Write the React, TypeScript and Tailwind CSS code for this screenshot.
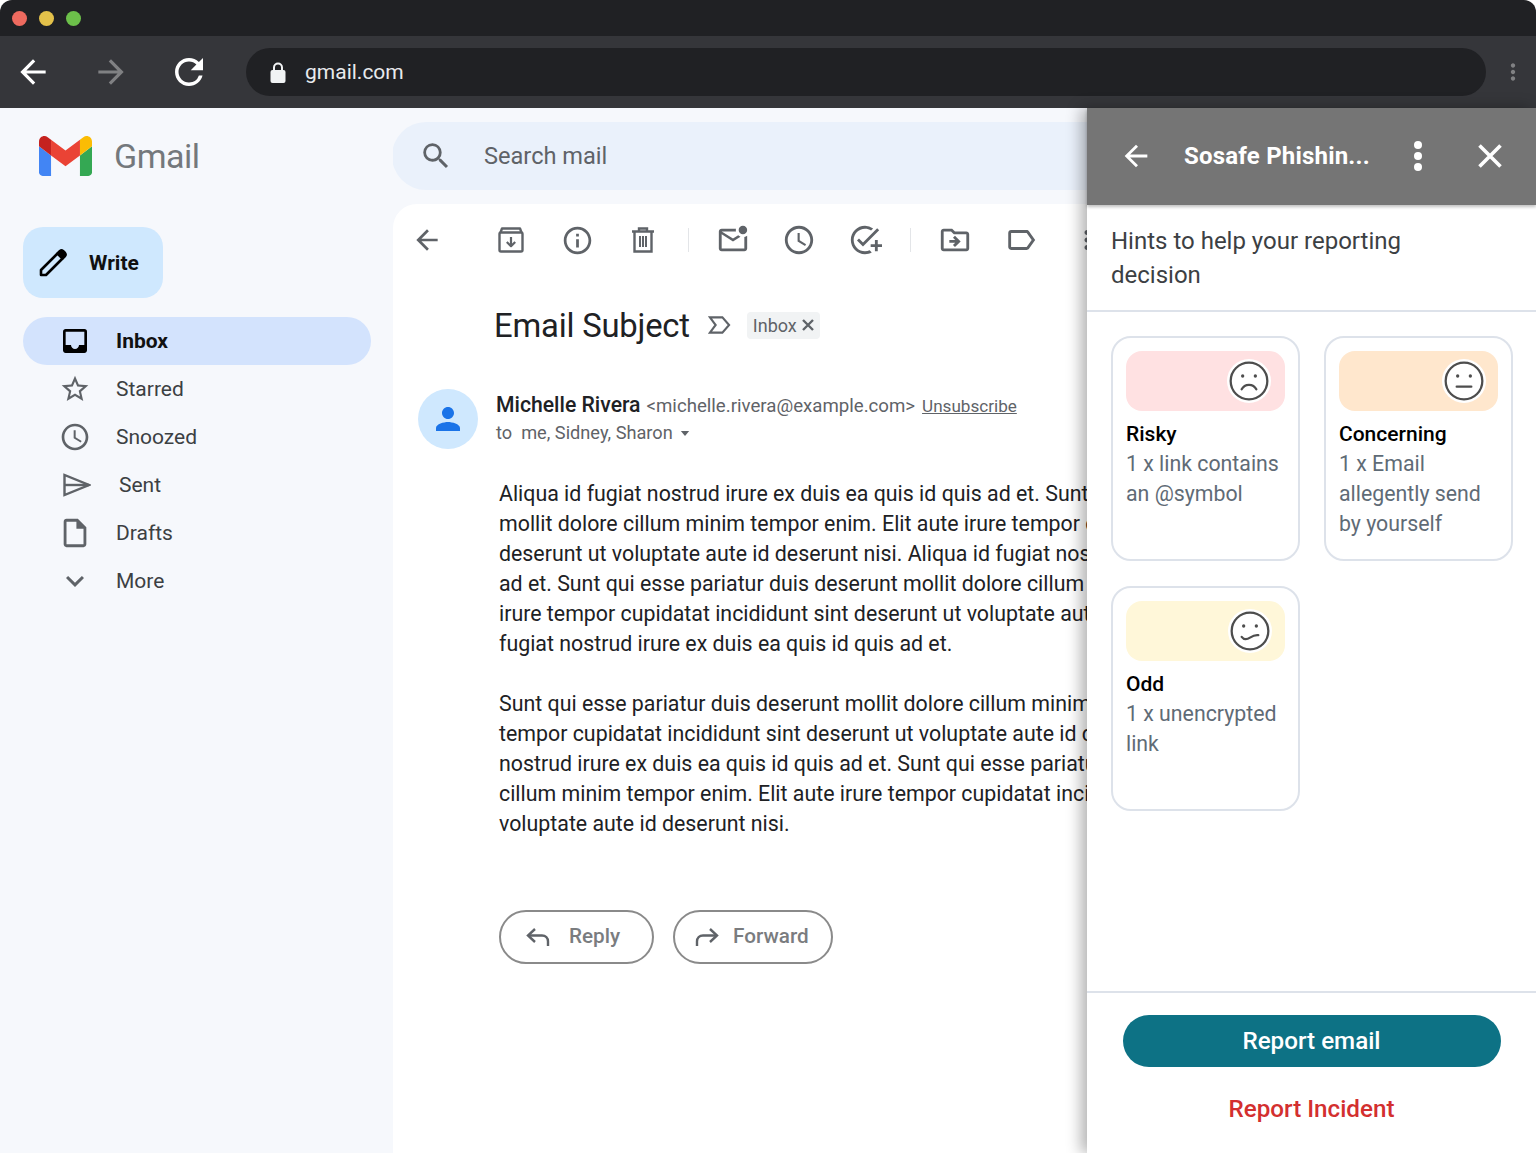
import {
  MdAccessTime,
  MdArrowBack,
  MdExpandMore,
  MdInbox,
  MdInfoOutline,
  MdMoreVert,
  MdOutlineAddTask,
  MdOutlineDriveFileMove,
  MdOutlineInsertDriveFile,
  MdOutlineLabel,
  MdOutlineMarkEmailUnread,
  MdPerson,
  MdRefresh,
  MdSearch,
  MdStarBorder,
} from "react-icons/md";

const navItems = [
  { label: "Starred", icon: <MdStarBorder className="h-8 w-8" /> },
  { label: "Snoozed", icon: <MdAccessTime className="h-8 w-8" /> },
  { label: "Sent", icon: <SentIcon />, shift: true },
  { label: "Drafts", icon: <MdOutlineInsertDriveFile className="h-[34px] w-[34px] shrink-0" /> },
  { label: "More", icon: <MdExpandMore className="h-[36px] w-[36px] shrink-0" /> },
];

const hints = [
  { title: "Risky", lines: ["1 x link contains", "an @symbol"], color: "bg-[#ffe1e2]", pad: "pr-[14px]", mouth: "M7.600 17c1.800-3.600 7-3.600 8.800 0" },
  { title: "Concerning", lines: ["1 x Email", "allegently send", "by yourself"], color: "bg-[#ffe7cd]", pad: "pr-[12px]", mouth: "M7.600 15.400h8.800" },
  { title: "Odd", lines: ["1 x unencrypted", "link"], color: "bg-[#fff7d9]", pad: "pr-[13px]", mouth: "M7 15.500c1.500 2 3.500 1.500 5 .5s3-1.800 5-1.500" },
];

function SentIcon() {
  return (
    <svg viewBox="0 0 28 24" className="ml-[4px] h-[24px] w-[28px] shrink-0" fill="none" stroke="currentColor" strokeWidth="2.400">
      <path d="M1.500 2v20L26 12 1.500 2Z" />
      <path d="M1.500 12H26" />
    </svg>
  );
}

function ArchiveIcon() {
  return (
    <svg viewBox="0 0 28 28" className="h-7 w-7" fill="none" stroke="#5f6368" strokeWidth="2.400" strokeLinejoin="round">
      <rect x="2.500" y="6.500" width="23" height="19" rx="1.500" />
      <path d="M3.500 6.500 5 2.500h18l1.500 4" />
      <path d="M14 11v9M9.800 16l4.200 4.200 4.200-4.200" strokeWidth="2.200" />
    </svg>
  );
}

function TrashIcon() {
  return (
    <svg viewBox="0 0 28 28" className="h-7 w-7" fill="none" stroke="#5f6368" strokeWidth="2.400">
      <path d="M3 5.500h22M10 5.500V2.500h8v3M5.500 5.500v20h17v-20" />
      <path d="M11 10v11M14 10v11M17 10v11" strokeWidth="2" />
    </svg>
  );
}

function Pencil() {
  return (
    <svg viewBox="0 0 28 28" className="h-[28px] w-[28px]" fill="none" stroke="#000" strokeWidth="2.600" strokeLinejoin="round">
      <path d="M2 26v-5L18.500 4.500l5 5L7 26H2Z" />
      <path d="M19 4l2-2c1-.8 2-.8 3 0l2 2c.8 1 .8 2 0 3l-2 2-5-5Z" fill="#000" />
    </svg>
  );
}

function LockIcon() {
  return (
    <svg viewBox="0 0 16 21" className="h-[21px] w-[16px]">
      <path d="M4 9V5.500a4 4 0 0 1 8 0V9" fill="none" stroke="#f1f3f4" strokeWidth="2" />
      <rect x="0.500" y="8" width="15" height="13" rx="2" fill="#f1f3f4" />
    </svg>
  );
}

function ImportantIcon() {
  return (
    <svg viewBox="0 0 24 20" className="h-[20px] w-[23px]" fill="none" stroke="#5f6368" strokeWidth="2.200">
      <path d="M2 2h13l7 8-7 8H2l6-8-6-8Z" />
    </svg>
  );
}

function ReplyIcon({ flip }: { flip?: boolean }) {
  return (
    <svg viewBox="0 0 24 20" className={flip ? "h-[20px] w-[24px] -scale-x-100" : "h-[20px] w-[24px]"} fill="none" stroke="#5f6368" strokeWidth="2.400">
      <path d="M9 2 2 8.500 9 15" />
      <path d="M2 8.500h14c3.500 0 6 2.500 6 6V19" />
    </svg>
  );
}

function Face({ mouth }: { mouth: string }) {
  return (
    <div className="flex h-[44px] w-[44px] items-center justify-center rounded-full bg-white">
      <svg viewBox="0 0 24 24" className="h-[40px] w-[40px]" fill="none" stroke="#4d4d4d" strokeWidth="1.350" strokeLinecap="round">
        <circle cx="12" cy="12" r="11" />
        <circle cx="8.200" cy="9" r="1" fill="#4d4d4d" stroke="none" />
        <circle cx="15.800" cy="9" r="1" fill="#4d4d4d" stroke="none" />
        <path d={mouth} />
      </svg>
    </div>
  );
}

function ToolButton({ children }: { children: React.ReactNode }) {
  return <div className="flex w-[66px] shrink-0 items-center justify-center text-[#5f6368]">{children}</div>;
}

function Divider() {
  return (
    <div className="flex w-[24px] shrink-0 justify-center">
      <div className="h-[24px] w-px bg-[#e3e5e8]" />
    </div>
  );
}

function Sidebar() {
  return (
    <aside className="flex w-[393px] shrink-0 flex-col pt-[28px]">
      <div className="flex h-[40px] items-center pl-[39px]">
        <svg viewBox="52 42 88 66" className="h-[40px] w-[53px]">
          <path fill="#4285f4" d="M58 108h14V74L52 59v43c0 3.320 2.690 6 6 6" />
          <path fill="#34a853" d="M120 108h14c3.320 0 6-2.690 6-6V59l-20 15" />
          <path fill="#fbbc04" d="M120 48v26l20-15v-8c0-7.420-8.470-11.650-14.400-7.200" />
          <path fill="#ea4335" d="M72 74V48l24 18 24-18v26L96 92" />
          <path fill="#c5221f" d="M52 51v8l20 15V48l-5.600-4.200c-5.940-4.450-14.400-.22-14.400 7.200" />
        </svg>
        <span className="ml-[22px] text-[34px] leading-none tracking-[-0.5px] text-[#74787c]">Gmail</span>
      </div>

      <button className="ml-[23px] mt-[51px] flex h-[71px] w-[140px] items-center rounded-[20px] bg-[#cfe8fe] pl-[16px]">
        <Pencil />
        <span className="ml-[22px] pt-[2px] text-[21px] font-bold text-[#111]">Write</span>
      </button>

      <div className="ml-[23px] mr-[22px] mt-[19px] flex h-[48px] items-center rounded-full bg-[#d3e3fd] pl-[36px]">
        <MdInbox className="h-[32px] w-[32px] text-black" />
        <span className="ml-[25px] pt-[2px] text-[21px] font-bold text-[#111]">Inbox</span>
      </div>
      {navItems.map((item) => (
        <div key={item.label} className="flex h-[48px] items-center pl-[59px] text-[#5f6368]">
          <div className="flex w-[32px] justify-center">{item.icon}</div>
          <span className={`pt-[2px] text-[21px] text-[#3c4043] ${item.shift ? "ml-[28px]" : "ml-[25px]"}`}>{item.label}</span>
        </div>
      ))}
    </aside>
  );
}

function MailView() {
  return (
    <main className="flex min-w-0 flex-1 flex-col overflow-hidden pt-[14px]">
      <div className="-ml-px flex h-[68px] shrink-0 items-center rounded-l-[34px] bg-[#eaf1fb] pl-[27px]">
        <MdSearch className="h-[34px] w-[34px] text-[#5f6368]" />
        <span className="ml-[31px] pt-[2px] text-[23.600px] text-[#5f6368]">Search mail</span>
      </div>

      <div className="mt-[14px] flex min-h-0 flex-1 flex-col rounded-tl-[24px] bg-white pl-px">
        {/* toolbar */}
        <div className="flex h-[72px] shrink-0 items-center">
          <ToolButton><MdArrowBack className="h-[32px] w-[32px]" /></ToolButton>
          <div className="w-[18px] shrink-0" />
          <ToolButton><ArchiveIcon /></ToolButton>
          <ToolButton><MdInfoOutline className="h-[33px] w-[33px]" /></ToolButton>
          <ToolButton><TrashIcon /></ToolButton>
          <Divider />
          <ToolButton><MdOutlineMarkEmailUnread className="h-[34px] w-[34px]" /></ToolButton>
          <ToolButton><MdAccessTime className="h-[34px] w-[34px]" /></ToolButton>
          <ToolButton><MdOutlineAddTask className="h-[34px] w-[34px]" /></ToolButton>
          <Divider />
          <ToolButton><MdOutlineDriveFileMove className="h-[34px] w-[34px]" /></ToolButton>
          <ToolButton><MdOutlineLabel className="h-[34px] w-[34px]" /></ToolButton>
          <ToolButton><MdMoreVert className="h-[30px] w-[30px]" /></ToolButton>
        </div>

        {/* subject */}
        <div className="mt-[28px] flex h-[44px] shrink-0 items-center pl-[100px]">
          <h1 className="text-[32.800px] font-normal leading-none tracking-[-0.2px] text-[#202124]">Email Subject</h1>
          <div className="ml-[18px] mt-[-2px]"><ImportantIcon /></div>
          <div className="ml-[16px] mt-[-2px] flex h-[27px] items-center rounded-[4px] bg-[#f1f3f4] pl-[6px] pr-[6px] text-[18px] text-[#5f6368]">
            Inbox
            <svg viewBox="0 0 12 12" className="ml-[5px] h-[12px] w-[12px]" stroke="#5f6368" strokeWidth="2.400">
              <path d="M1 1l10 10M11 1 1 11" />
            </svg>
          </div>
        </div>

        {/* sender */}
        <div className="mt-[41px] flex shrink-0 pl-[24px]">
          <div className="flex h-[60px] w-[60px] items-center justify-center rounded-full bg-[#cfe8fe]">
            <MdPerson className="h-[36px] w-[36px] text-[#1a73e8]" />
          </div>
          <div className="ml-[18px] whitespace-nowrap">
            <div className="flex h-[30px] items-baseline">
              <span className="text-[21.200px] font-medium text-[#202124]">Michelle Rivera</span>
              <span className="ml-[6px] text-[18.650px] text-[#5f6368]">&lt;michelle.rivera@example.com&gt;</span>
              <span className="ml-[7px] text-[17.100px] text-[#5f6368] underline">Unsubscribe</span>
            </div>
            <div className="mt-[1px] flex h-[26px] items-center text-[18.200px] text-[#5f6368]">
              <span>to&nbsp; me, Sidney, Sharon</span>
              <svg viewBox="0 0 10 6" className="ml-[7px] h-[5px] w-[10px]"><path d="M0 0h10L5 6z" fill="#5f6368" /></svg>
            </div>
          </div>
        </div>

        {/* body, runs on under the side panel */}
        <div className="ml-[105px] mt-[30px] w-[900px] shrink-0 whitespace-nowrap text-[21.350px] leading-[30px] text-[#202124]">
          <p>Aliqua id fugiat nostrud irure ex duis ea quis id quis ad et. Sunt qui esse<br />
            mollit dolore cillum minim tempor enim. Elit aute irure tempor cupidatat<br />
            deserunt ut voluptate aute id deserunt nisi. Aliqua id fugiat nostrud irure<br />
            ad et. Sunt qui esse pariatur duis deserunt mollit dolore cillum minim tempor<br />
            irure tempor cupidatat incididunt sint deserunt ut voluptate aute id deserunt<br />
            fugiat nostrud irure ex duis ea quis id quis ad et.</p>
          <p className="mt-[30px]">Sunt qui esse pariatur duis deserunt mollit dolore cillum minim tempor enim<br />
            tempor cupidatat incididunt sint deserunt ut voluptate aute id deserunt nisi<br />
            nostrud irure ex duis ea quis id quis ad et. Sunt qui esse pariatur duis<br />
            cillum minim tempor enim. Elit aute irure tempor cupidatat incididunt sint<br />
            voluptate aute id deserunt nisi.</p>
        </div>

        {/* actions */}
        <div className="ml-[105px] mt-[71px] flex shrink-0 gap-[19px] text-[20.700px] font-medium text-[#7a7c7f]">
          <button className="flex h-[54px] w-[155px] items-center rounded-full border-2 border-[#8a8a8a] pl-[25px]">
            <ReplyIcon />
            <span className="ml-[19px]">Reply</span>
          </button>
          <button className="flex h-[54px] w-[160px] items-center rounded-full border-2 border-[#8a8a8a] pl-[20px]">
            <ReplyIcon flip />
            <span className="ml-[14px]">Forward</span>
          </button>
        </div>
      </div>
    </main>
  );
}

function SidePanel() {
  return (
    <section className="relative z-10 flex w-[449px] shrink-0 flex-col bg-white shadow-[-6px_0_14px_rgba(0,0,0,0.3)]">
      <header className="flex h-[97px] shrink-0 items-center bg-[#757575] pb-[2px] pl-[32px] text-white shadow-[0_2px_3px_rgba(0,0,0,0.25)]">
        <MdArrowBack className="h-[34px] w-[34px]" />
        <span className="ml-[31px] text-[24px] font-bold tracking-[0.2px]">Sosafe Phishin...</span>
        <svg viewBox="0 0 8 30" className="ml-[44px] h-[30px] w-[8px]" fill="#fff">
          <circle cx="4" cy="4" r="4" />
          <circle cx="4" cy="15" r="4" />
          <circle cx="4" cy="26" r="4" />
        </svg>
        <svg viewBox="0 0 24 24" className="ml-[56px] h-[24px] w-[24px]" stroke="#fff" strokeWidth="3.600">
          <path d="M1.500 1.500l21 21M22.500 1.500l-21 21" />
        </svg>
      </header>

      <div className="border-b-2 border-[#dde2ea] px-[24px] pb-[18px] pt-[19px] text-[24px] leading-[34px] text-[#3c4043]">
        Hints to help your reporting<br />decision
      </div>

      <div className="grid flex-1 grid-cols-[189px_189px] content-start gap-x-[24px] gap-y-[25px] p-[24px]">
        {hints.map((hint) => (
          <div key={hint.title} className="h-[225px] rounded-[20px] border-2 border-[#dde2ea] p-[13px]">
            <div className={`flex h-[60px] items-center justify-end rounded-[16px] ${hint.pad} ${hint.color}`}>
              <Face mouth={hint.mouth} />
            </div>
            <div className="mt-[8px] text-[21px] font-medium leading-[30px] text-black">{hint.title}</div>
            <div className="text-[21.300px] leading-[30px] text-[#5f6b76]">
              {hint.lines.map((line) => (
                <div key={line}>{line}</div>
              ))}
            </div>
          </div>
        ))}
      </div>

      <footer className="flex h-[162px] shrink-0 flex-col items-center border-t-2 border-[#dde2ea] pt-[22px]">
        <button className="h-[52px] w-[378px] rounded-full bg-[#0d7285] text-[24.200px] font-medium text-white">Report email</button>
        <button className="mt-[24px] text-[24.200px] font-medium text-[#d32f2f]">Report Incident</button>
      </footer>
    </section>
  );
}

export default function App() {
  return (
    <div className="h-[1153px] w-[1536px] overflow-hidden bg-white font-['Roboto',sans-serif]">
      <div className="flex h-[36px] items-center gap-[12px] rounded-t-[12px] bg-[#202124] pl-[12px]">
        <div className="h-[15px] w-[15px] rounded-full bg-[#ee6a5f]" />
        <div className="h-[15px] w-[15px] rounded-full bg-[#e3c14a]" />
        <div className="h-[15px] w-[15px] rounded-full bg-[#6cc04a]" />
      </div>

      <div className="flex h-[72px] items-center bg-[#35363a] pl-[14px] pr-[10px] text-white">
        <MdArrowBack className="h-[38px] w-[38px]" />
        <MdArrowBack className="ml-[40px] h-[38px] w-[38px] -scale-x-100 text-[#808183]" />
        <MdRefresh className="ml-[38px] h-[42px] w-[42px]" />
        <div className="ml-[36px] flex h-[48px] flex-1 items-center rounded-full bg-[#202124] pl-[24px]">
          <LockIcon />
          <span className="ml-[19px] pt-[2px] text-[21px] text-[#e8eaed]">gmail.com</span>
        </div>
        <MdMoreVert className="ml-[14px] h-[26px] w-[26px] text-[#808183]" />
      </div>

      <div className="flex h-[1045px] bg-[#f6f8fc]">
        <Sidebar />
        <MailView />
        <SidePanel />
      </div>
    </div>
  );
}
